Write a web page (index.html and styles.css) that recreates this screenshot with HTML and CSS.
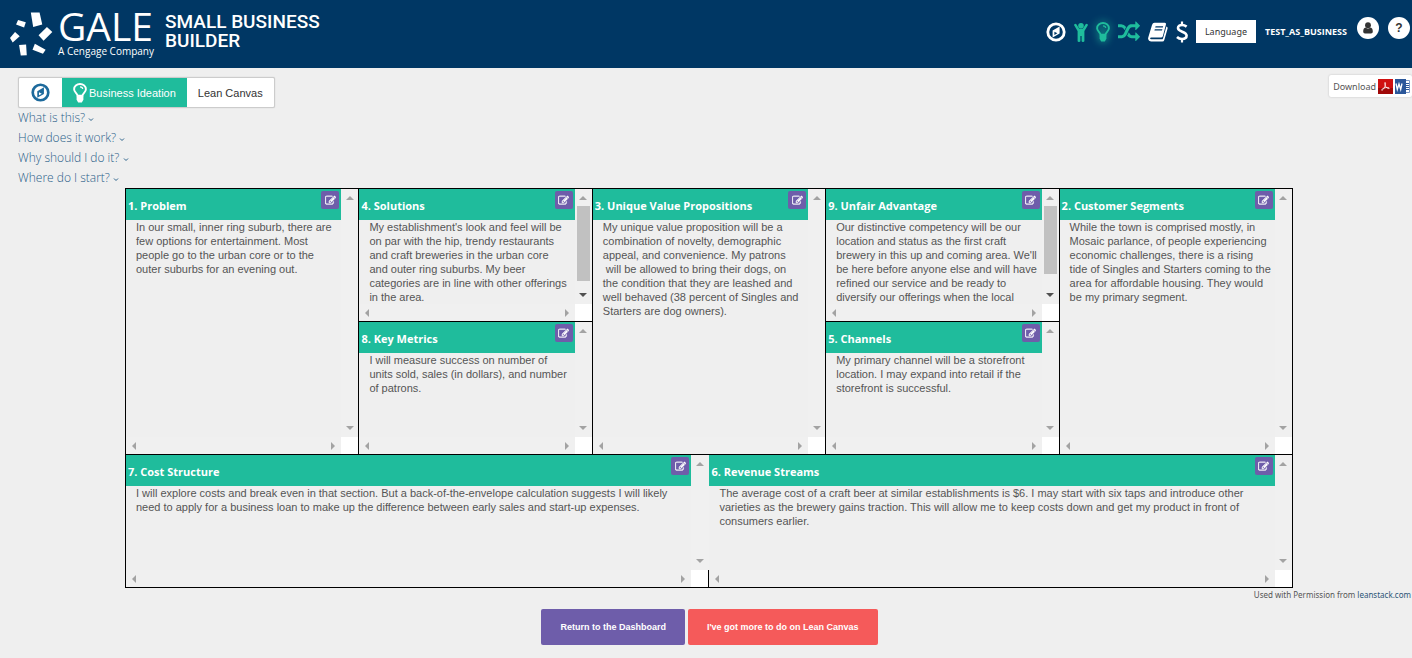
FILE: index.html
```html
<!DOCTYPE html>
<html lang="en">
<head>
    <meta charset="utf-8">
    <title>Lean Canvas - Small Business Builder</title>
    <link rel="stylesheet" href="styles.css">
</head>
<body>

    <!-- shared icons -->
    <svg class="sprite" aria-hidden="true">
        <symbol id="compass" viewBox="0 0 20 20">
            <circle cx="10" cy="10" r="8.2" fill="none" stroke="currentColor" stroke-width="2.8"/>
            <path fill="currentColor" fill-rule="evenodd" d="M13.600 4.600v7l-7 4V8.600zM8.400 9.700v3.300l3-1.700z"/>
        </symbol>
        <symbol id="bulb" viewBox="0 0 14 20">
            <path fill="none" stroke="currentColor" stroke-width="1.9" d="M4.600 12.600C4.400 10.400 1.100 9.400 1.100 6.200a5.900 5.200 0 0 1 11.800 0c0 3.200-3.300 4.200-3.500 6.400z"/>
            <path fill="none" stroke="currentColor" stroke-width="1.200" d="M7 3.800c1.600 0 2.700.8 2.700 2.200"/>
            <path fill="currentColor" d="M3.600 12.500h6.800v4.200L8.800 19.600H5.200l-1.600-2.900z"/>
        </symbol>
        <symbol id="edit" viewBox="0 0 1792 1792">
            <path fill="currentColor" stroke="currentColor" stroke-width="50" d="M888 1184l116-116-152-152-116 116v56h96v96h56zm440-720q-16-16-33 1l-350 350q-17 17-1 33t33-1l350-350q17-17 1-33zm80 594v190q0 119-84.5 203.5t-203.5 84.5h-832q-119 0-203.500-84.500t-84.500-203.500v-832q0-119 84.500-203.500t203.500-84.500h832q63 0 117 25 15 7 18 23 3 17-9 29l-49 49q-14 14-32 8-23-6-45-6h-832q-66 0-113 47t-47 113v832q0 66 47 113t113 47h832q66 0 113-47t47-113v-126q0-13 9-22l64-64q15-15 35-7t20 29zm-96-738l288 288-672 672h-288v-288zm444 132l-92 92-288-288 92-92q28-28 68-28t68 28l152 152q28 28 28 68t-28 68z"/>
        </symbol>
    </svg>

    <header class="topbar">
        <a class="brand" href="#" aria-label="Gale Small Business Builder">
            <svg class="burst" viewBox="30 36 128 130" fill="#fff">
                <path d="M92 37h26l8 36-27 7z"/>
                <path d="M54 59l23 7-5 16-24-9z"/>
                <path d="M140 80l16 15-26 26-15-16z"/>
                <path d="M45 95l14 13-21 18-8-13z"/>
                <path d="M57 134l21-2 2 32-18 1z"/>
                <path d="M104 130l32 18-8 12-31-12z"/>
            </svg>
            <span class="gale">
                <span class="gale-name">GALE</span>
                <span class="gale-sub">A Cengage Company</span>
            </span>
            <span class="product">SMALL BUSINESS<br>BUILDER</span>
        </a>

        <nav class="tools">
            <a href="#" aria-label="Start"><svg width="20" height="20"><use href="#compass"/></svg></a>
            <a class="done" href="#" aria-label="About you">
                <svg width="14" height="20" viewBox="0 0 14 20" fill="currentColor">
                    <circle cx="7" cy="3.800" r="2.800"/>
                    <path d="M.4 2.200q1-1 2 0l2.800 4.600h3.600l2.800-4.600q1-1 2 0 .5.700 0 1.600L10.400 9v10q0 .9-1.400.9T7.600 19v-5H6.400v5q0 .9-1.400.9T3.600 19V9L.4 3.800q-.5-.9 0-1.600z"/>
                </svg>
            </a>
            <a class="done glow" href="#" aria-label="Business Ideation"><svg width="14" height="20"><use href="#bulb"/></svg></a>
            <a class="done" href="#" aria-label="Pivot">
                <svg width="22" height="22" viewBox="0 0 1792 1792" fill="currentColor">
                    <path d="M666 481q-60 92-137 273-22-45-37-72.500t-40.500-63.500-51-56.500-63-35-81.500-14.500h-224q-14 0-23-9t-9-23v-192q0-14 9-23t23-9h224q250 0 410 225zm1126 799q0 14-9 23l-320 320q-9 9-23 9-13 0-22.500-9.500t-9.500-22.500v-192q-32 0-85 .5t-81 1-73-1-71-5-64-10.500-63-18.500-58-28.500-59-40-55-53.500-56-69.500q59-93 136-273 22 45 37 72.500t40.500 63.500 51 56.500 63 35 81.500 14.500h256v-192q0-14 9-23t23-9q12 0 24 10l319 319q9 9 9 23zm0-896q0 14-9 23l-320 320q-9 9-23 9-13 0-22.500-9.500t-9.500-22.500v-192h-256q-48 0-87 15t-69 45-51 61.500-45 77.500q-32 62-78 171-29 66-49.500 111t-54 105-64 100-74 83-90 68.500-106.500 42-128 16.500h-224q-14 0-23-9t-9-23v-192q0-14 9-23t23-9h224q48 0 87-15t69-45 51-61.500 45-77.500q32-62 78-171 29-66 49.500-111t54-105 64-100 74-83 90-68.500 106.500-42 128-16.500h256v-192q0-14 9-23t23-9q12 0 24 10l319 319q9 9 9 23z"/>
                </svg>
            </a>
            <a href="#" aria-label="Plan">
                <svg width="20" height="20" viewBox="0 0 20 20">
                    <path fill="currentColor" fill-rule="evenodd" d="M6.500.8h10.300q1.500 0 1.200 1.500l-3.100 11.800q-.4 1.500-2 1.500H3.200q-1.100 0-1.100.9 0 .8 1.200.8h10.600q.8 0 1.100-.9L18.400 4.600q1.600.4 1.200 2L16.300 18q-.4 1.500-2 1.500H3q-2.500-.2-2.900-2.400-.1-.9.300-2L4 3Q4.700.9 6.500.8zM7.600 4.200l-.4 1.300h7.600l.4-1.300zM6.800 7.200l-.4 1.300H14l.4-1.300z"/>
                </svg>
            </a>
            <a href="#" aria-label="Finance">
                <svg width="12" height="22" viewBox="0 0 12 22" fill="none" stroke="currentColor">
                    <path stroke-width="2.600" d="M10.600 5.600C9 4.400 7.500 4 6 4 3.600 4 2 5.200 2 7c0 4.200 8.600 3.200 8.600 7.600 0 2-1.800 3.400-4.600 3.400-1.900 0-3.700-.7-5-2"/>
                    <path stroke-width="2.200" d="M6 .5v4M6 17v4.500"/>
                </svg>
            </a>
            <button class="language" type="button">Language</button>
            <span class="user">TEST_AS_BUSINESS</span>
            <a class="round" href="#" aria-label="Account">
                <svg width="10" height="12" viewBox="0 0 10 12" fill="currentColor">
                    <circle cx="5" cy="3.200" r="2.900"/>
                    <path d="M2.500 5.600q2.500 2 5 0Q9.800 6.200 9.800 9.800 9.800 11.600 8 11.600H2Q.2 11.600.2 9.800.2 6.200 2.500 5.600z"/>
                </svg>
            </a>
            <a class="round" href="#" aria-label="Help">?</a>
        </nav>
    </header>

    <main>
        <div class="toolbar">
            <nav class="crumbs">
                <a class="crumb home" href="#" aria-label="Home"><svg width="19" height="19"><use href="#compass"/></svg></a>
                <a class="crumb active" href="#"><svg width="14" height="20"><use href="#bulb"/></svg>Business Ideation</a>
                <a class="crumb" href="#">Lean Canvas</a>
            </nav>
            <div class="download">
                <span>Download</span>
                <a href="#" aria-label="PDF">
                    <svg width="15" height="15" viewBox="0 0 15 15">
                        <rect width="15" height="15" fill="#d01010"/>
                        <rect y="9" width="15" height="6" fill="#a00808"/>
                        <path fill="none" stroke="#fff" stroke-width=".8" d="M7 3.500c1 0 .5 2.500-.2 4.200C6 9.600 4.500 11.500 3.700 11.200c-.8-.5 2-2.400 4.300-2.600 2-.2 3.600.1 3.300.8-.3.600-2.300-.2-3.300-1.400C7 6.800 6.300 3.500 7 3.500z"/>
                    </svg>
                </a>
                <a href="#" aria-label="Word">
                    <svg width="15" height="15" viewBox="0 0 15 15">
                        <path fill="#fff" stroke="#7c97c4" d="M9 1.500h5.500v12H9z"/>
                        <path stroke="#2b579a" d="M11 4.500h3M11 6.500h3M11 8.500h3M11 10.500h3"/>
                        <path fill="#2b579a" d="M0 0h11v15H0z"/>
                        <path fill="none" stroke="#fff" stroke-width="1.300" d="M1 4.500l1.300 6L4 5l1.700 5.500 1.300-6"/>
                    </svg>
                </a>
            </div>
        </div>

        <ul class="help">
            <li><a href="#">What is this? <svg width="6" height="4"><path d="M1 .5l2 2 2-2"/></svg></a></li>
            <li><a href="#">How does it work? <svg width="6" height="4"><path d="M1 .5l2 2 2-2"/></svg></a></li>
            <li><a href="#">Why should I do it? <svg width="6" height="4"><path d="M1 .5l2 2 2-2"/></svg></a></li>
            <li><a href="#">Where do I start? <svg width="6" height="4"><path d="M1 .5l2 2 2-2"/></svg></a></li>
        </ul>

        <div class="canvas">
            <section class="box tall">
                <div class="content">
                    <h2>1. Problem <button type="button" aria-label="Edit Problem"><svg width="11" height="11"><use href="#edit"/></svg></button></h2>
                    <p>In our small, inner ring suburb, there are few options for entertainment. Most people go to the urban core or to the outer suburbs for an evening out.</p>
                </div>
                <div class="vbar"><i class="up"></i><i class="down"></i></div>
                <div class="hbar"><i class="left"></i><i class="right"></i></div>
            </section>

            <section class="box">
                <div class="content">
                    <h2>4. Solutions <button type="button" aria-label="Edit Solutions"><svg width="11" height="11"><use href="#edit"/></svg></button></h2>
                    <p>My establishment's look and feel will be on par with the hip, trendy restaurants and craft breweries in the urban core<br>and outer ring suburbs. My beer<br>categories are in line with other offerings in the area.</p>
                </div>
                <div class="vbar scrolls"><i class="up"></i><b class="thumb" style="height: 75px"></b><i class="down"></i></div>
                <div class="hbar"><i class="left"></i><i class="right"></i></div>
            </section>

            <section class="box tall">
                <div class="content">
                    <h2>3. Unique Value Propositions <button type="button" aria-label="Edit Unique Value Propositions"><svg width="11" height="11"><use href="#edit"/></svg></button></h2>
                    <p>My unique value proposition will be a combination of novelty, demographic appeal, and convenience. My patrons<br>&nbsp;will be allowed to bring their dogs, on<br>the condition that they are leashed and<br>well behaved (38 percent of Singles and Starters are dog owners).</p>
                </div>
                <div class="vbar"><i class="up"></i><i class="down"></i></div>
                <div class="hbar"><i class="left"></i><i class="right"></i></div>
            </section>

            <section class="box">
                <div class="content">
                    <h2>9. Unfair Advantage <button type="button" aria-label="Edit Unfair Advantage"><svg width="11" height="11"><use href="#edit"/></svg></button></h2>
                    <p>Our distinctive competency will be our location and status as the first craft brewery in this up and coming area. We'll be here before anyone else and will have refined our service and be ready to diversify our offerings when the local</p>
                </div>
                <div class="vbar scrolls"><i class="up"></i><b class="thumb" style="height: 68px"></b><i class="down"></i></div>
                <div class="hbar"><i class="left"></i><i class="right"></i></div>
            </section>

            <section class="box tall">
                <div class="content">
                    <h2>2. Customer Segments <button type="button" aria-label="Edit Customer Segments"><svg width="11" height="11"><use href="#edit"/></svg></button></h2>
                    <p>While the town is comprised mostly, in Mosaic parlance, of people experiencing economic challenges, there is a rising tide of Singles and Starters coming to the area for affordable housing. They would be my primary segment.</p>
                </div>
                <div class="vbar"><i class="up"></i><i class="down"></i></div>
                <div class="hbar"><i class="left"></i><i class="right"></i></div>
            </section>

            <section class="box">
                <div class="content">
                    <h2>8. Key Metrics <button type="button" aria-label="Edit Key Metrics"><svg width="11" height="11"><use href="#edit"/></svg></button></h2>
                    <p>I will measure success on number of units sold, sales (in dollars), and number of patrons.</p>
                </div>
                <div class="vbar"><i class="up"></i><i class="down"></i></div>
                <div class="hbar"><i class="left"></i><i class="right"></i></div>
            </section>

            <section class="box">
                <div class="content">
                    <h2>5. Channels <button type="button" aria-label="Edit Channels"><svg width="11" height="11"><use href="#edit"/></svg></button></h2>
                    <p>My primary channel will be a storefront location. I may expand into retail if the storefront is successful.</p>
                </div>
                <div class="vbar"><i class="up"></i><i class="down"></i></div>
                <div class="hbar"><i class="left"></i><i class="right"></i></div>
            </section>

            <section class="box wide">
                <div class="content">
                    <h2>7. Cost Structure <button type="button" aria-label="Edit Cost Structure"><svg width="11" height="11"><use href="#edit"/></svg></button></h2>
                    <p>I will explore costs and break even in that section. But a back-of-the-envelope calculation suggests I will likely need to apply for a business loan to make up the difference between early sales and start-up expenses.</p>
                </div>
                <div class="vbar"><i class="up"></i><i class="down"></i></div>
                <div class="hbar"><i class="left"></i><i class="right"></i></div>
            </section>

            <section class="box wide revenue">
                <div class="content">
                    <h2>6. Revenue Streams <button type="button" aria-label="Edit Revenue Streams"><svg width="11" height="11"><use href="#edit"/></svg></button></h2>
                    <p>The average cost of a craft beer at similar establishments is $6. I may start with six taps and introduce other varieties as the brewery gains traction. This will allow me to keep costs down and get my product in front of consumers earlier.</p>
                </div>
                <div class="vbar"><i class="up"></i><i class="down"></i></div>
                <div class="hbar"><i class="left"></i><i class="right"></i></div>
            </section>
        </div>

        <p class="credit">Used with Permission from <a href="#">leanstack.com</a></p>

        <div class="actions">
            <button class="btn back" type="button">Return to the Dashboard</button>
            <button class="btn more" type="button">I've got more to do on Lean Canvas</button>
        </div>
    </main>

</body>
</html>
```
FILE: styles.css
```css
* {
    box-sizing: border-box;
}
body {
    margin: 0;
    background: #efefef;
    color: #555;
    font-family: "Liberation Sans", Arial, sans-serif;
    font-size: 11px;
}
a {
    color: inherit;
    text-decoration: none;
}
svg {
    display: block;
}
button {
    border: 0;
    font-family: inherit;
    cursor: pointer;
}
.sprite {
    display: none;
}

/* top bar */
.topbar {
    display: flex;
    justify-content: space-between;
    height: 68px;
    padding: 0 2px 0 10px;
    background: #003764;
    color: #fff;
}
.brand {
    display: flex;
    padding-top: 12px;
}
.burst {
    width: 43px;
    height: 44px;
}
.gale {
    display: flex;
    flex-direction: column;
    margin-left: 5px;
    font-family: "Open Sans", sans-serif;
}
.gale-name {
    font-size: 39px;
    line-height: 28px;
}
.gale-sub {
    margin-top: 3px;
    font-size: 10px;
    line-height: 16px;
}
.product {
    margin-left: 11px;
    font-family: Roboto, sans-serif;
    font-size: 19px;
    font-weight: 500;
    line-height: 19px;
}
.tools {
    display: flex;
    align-items: center;
    gap: 8px;
    height: 63px;
}
.tools .done {
    color: #1fbc9c;
}
.tools .glow {
    filter: drop-shadow(0 0 4px #1fbc9c);
}
.language {
    width: 60px;
    height: 23px;
    padding: 0;
    background: #fff;
    color: #333;
    font-family: "Noto Sans", sans-serif;
    font-size: 9px;
}
.user {
    margin: 0 1px;
    font-family: "Open Sans", sans-serif;
    font-size: 9px;
    font-weight: 700;
}
.round {
    display: flex;
    align-items: center;
    justify-content: center;
    width: 22px;
    height: 22px;
    margin: 0 0 7px 1px;
    border-radius: 50%;
    background: #fff;
    color: #333;
    font-size: 12px;
    font-weight: 700;
}

/* breadcrumb and downloads */
.toolbar {
    display: flex;
    justify-content: space-between;
    align-items: flex-start;
    padding: 7px 0 0 18px;
}
.crumbs {
    display: flex;
    height: 31px;
    margin-top: 2px;
    border: 1px solid #ccc;
    border-radius: 2px;
    background: #fff;
    box-shadow: 0 0 1px #bbb;
}
.crumb {
    display: flex;
    align-items: center;
    gap: 2px;
    padding: 0 11px;
    color: #333;
}
.crumb.home {
    padding: 0 12px;
    color: #1d6a9c;
}
.crumb.active {
    background: #1fbc9c;
    color: #fff;
}
.download {
    display: flex;
    align-items: center;
    gap: 2px;
    height: 22px;
    padding: 0 2px 0 4px;
    border-radius: 2px;
    background: #fff;
    box-shadow: 0 0 2px #bbb;
    font-family: "Noto Sans", sans-serif;
    font-size: 9px;
}

/* help links */
.help {
    margin: 0;
    padding: 0 0 0 18px;
    list-style: none;
    color: #2a6089;
    font-family: "Open Sans", sans-serif;
    font-size: 12px;
    font-weight: 300;
    line-height: 20px;
}
.help svg {
    display: inline-block;
    fill: none;
    stroke: currentColor;
}

/* canvas grid */
.canvas {
    display: grid;
    grid-template-columns: repeat(10, 1fr);
    grid-template-rows: repeat(3, 133px);
    margin: 0 119px 0 125px;
    border: solid #000;
    border-width: 0 1px 1px 0;
}
.box {
    display: grid;
    grid-column: span 2;
    grid-template-columns: 1fr 17px;
    grid-template-rows: 1fr 17px;
    border: solid #000;
    border-width: 1px 0 0 1px;
    background: #fff;
}
.box.tall {
    grid-row: span 2;
}
.box.wide {
    grid-column: span 5;
}
.content {
    min-width: 0;
    min-height: 0;
    overflow: hidden;
    background: #efefef;
}
.content h2 {
    display: flex;
    justify-content: space-between;
    height: 31px;
    margin: 0;
    padding: 2px 2px 0;
    background: #1fbc9c;
    color: #fff;
    font-family: "Open Sans", sans-serif;
    font-size: 11px;
    font-weight: 700;
    line-height: 30px;
}
.content h2 button {
    display: flex;
    align-items: center;
    justify-content: center;
    width: 18px;
    height: 18px;
    padding: 0;
    border-radius: 2px;
    background: #6e5daa;
    color: #fff;
}
.content p {
    margin: 0;
    padding: 0 3px 0 10px;
    line-height: 14px;
}

/* scroll bars */
.vbar,
.hbar {
    display: flex;
    align-items: center;
    justify-content: space-between;
    background: #f0f0f0;
}
.vbar {
    flex-direction: column;
    padding: 7px 0;
}
.hbar {
    padding: 0 6px;
}
.vbar i,
.hbar i {
    border: 4px solid transparent;
}
.vbar .up {
    border-top: 0;
    border-bottom-color: #a3a3a3;
}
.vbar .down {
    border-bottom: 0;
    border-top-color: #a3a3a3;
}
.vbar.scrolls .down {
    border-top-color: #505050;
}
.hbar .left {
    border-left: 0;
    border-right-color: #a3a3a3;
}
.hbar .right {
    border-right: 0;
    border-left-color: #a3a3a3;
}
.thumb {
    width: 13px;
    margin: 6px 0 auto;
    background: #c1c1c1;
}

/* the divider only shows beside the bottom scroll bar here */
.box.revenue {
    border-left: 0;
}
.revenue .content {
    border-left: 1px solid #f0f0f0;
}
.revenue .hbar {
    border-left: 1px solid #000;
}

/* footer */
.credit {
    margin: 0;
    padding-right: 1px;
    font-family: "Noto Sans", sans-serif;
    font-size: 8px;
    line-height: 14px;
    text-align: right;
}
.credit a {
    color: #2a5577;
}
.actions {
    display: flex;
    justify-content: center;
    gap: 3px;
    margin: 7px 118px 0 125px;
}
.btn {
    height: 36px;
    padding: 0 19px;
    border-radius: 2px;
    color: #fff;
    font-size: 9px;
    font-weight: 700;
}
.btn.back {
    background: #6e5daa;
}
.btn.more {
    background: #f55a5a;
}
```
